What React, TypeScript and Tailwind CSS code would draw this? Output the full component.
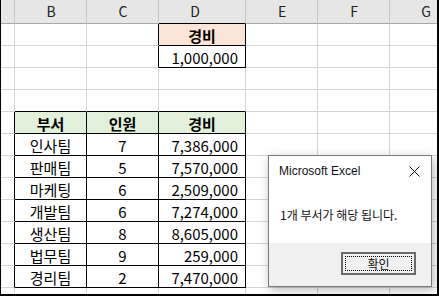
const COLS = [14, 72, 72, 87, 72, 72, 47];
const LETTERS = ["", "B", "C", "D", "E", "F", "G"];

type Cell = { text: string; align?: "c" | "r"; bold?: boolean; bg?: string };

const DATA: [string, string, string][] = [
  ["인사팀", "7", "7,386,000"],
  ["판매팀", "5", "7,570,000"],
  ["마케팅", "6", "2,509,000"],
  ["개발팀", "6", "7,274,000"],
  ["생산팀", "8", "8,605,000"],
  ["법무팀", "9", "259,000"],
  ["경리팀", "2", "7,470,000"],
];

function cellAt(r: number, c: number): Cell | null {
  if (r === 1 && c === 3) return { text: "경비", align: "c", bold: true, bg: "bg-[#fce4d6]" };
  if (r === 2 && c === 3) return { text: "1,000,000", align: "r" };
  if (r === 5 && c >= 1 && c <= 3)
    return { text: ["부서", "인원", "경비"][c - 1], align: "c", bold: true, bg: "bg-[#e2efda]" };
  if (r >= 6 && r <= 12 && c >= 1 && c <= 3) {
    const row = DATA[r - 6];
    return { text: row[c - 1], align: c === 3 ? "r" : "c" };
  }
  return null;
}

function bordered(r: number, c: number) {
  return (c === 3 && (r === 1 || r === 2)) || (c >= 1 && c <= 3 && r >= 5 && r <= 12);
}

// row heights include the 1px bottom line
const ROWS = [22, 22, 22, 22, 22, 22, 22, 22, 22, 22, 22, 22, 6];

function HeaderRow() {
  return (
    <div className="flex h-[24px] bg-[#e6e6e6]">
      {COLS.map((w, c) => (
        <div
          key={c}
          style={{ width: w }}
          className={`flex h-full shrink-0 items-center overflow-hidden border-b ${
            bordered(1, c) ? "border-b-black" : "border-b-[#a8a8a8]"
          } ${c < COLS.length - 1 ? "border-r border-r-[#c8c8c8]" : ""}`}
        >
          <span className="w-[72px] shrink-0 text-center text-[14px] text-[#222]">{LETTERS[c]}</span>
        </div>
      ))}
    </div>
  );
}

function Dialog() {
  return (
    <div className="absolute left-[267px] top-[155px] flex h-[132px] w-[164px] flex-col border border-[#7a7a7a] bg-white shadow-[2px_3px_10px_rgba(0,0,0,0.28)]">
      <div className="flex h-[30px] items-center justify-between pl-[10px] pr-[10px]">
        <span className="font-['Liberation_Sans',sans-serif] text-[12px] text-[#111]">Microsoft Excel</span>
        <svg width="11" height="11" viewBox="0 0 11 11" className="mr-[1px]">
          <path d="M0.5 0.5 L10.5 10.5 M10.5 0.5 L0.5 10.5" stroke="#111" strokeWidth="1" />
        </svg>
      </div>
      <div className="flex h-[57px] items-center pl-[11px] text-[12px] text-[#111]">1개 부서가 해당 됩니다.</div>
      <div className="flex flex-1 items-start justify-end bg-[#f0f0f0] pr-[15px] pt-[9px]">
        <div className="flex h-[23px] w-[75px] items-center justify-center border-2 border-[#6a6a6a] bg-[#f2f2f2] p-[2px]">
          <div className="flex h-full w-full items-center justify-center border border-dotted border-black text-[12px] text-[#111]">
            확인
          </div>
        </div>
      </div>
    </div>
  );
}

export default function App() {
  return (
    <div className="relative h-[296px] w-[439px] overflow-hidden border-b-2 border-l border-r-2 border-black bg-white font-['Noto_Sans_CJK_KR',sans-serif]">
      <HeaderRow />
      {ROWS.map((h, i) => {
        const r = i + 1;
        return (
          <div key={r} className="flex" style={{ height: h }}>
            {COLS.map((w, c) => {
              const cell = cellAt(r, c);
              const right = bordered(r, c) || bordered(r, c + 1);
              const bottom = bordered(r, c) || bordered(r + 1, c);
              return (
                <div
                  key={c}
                  style={{ width: w }}
                  className={`flex h-full shrink-0 items-center text-[15px] leading-none text-black ${
                    cell?.bg ?? ""
                  } ${c < COLS.length - 1 ? (right ? "border-r border-r-black" : "border-r border-r-[#d4d4d4]") : ""} ${
                    r < 13 ? (bottom ? "border-b border-b-black" : "border-b border-b-[#d4d4d4]") : ""
                  } ${cell?.align === "r" ? "justify-end pr-[7px]" : "justify-center"} ${cell?.bold ? "font-bold" : ""}`}
                >
                  {cell ? <span className="pt-[1px]">{cell.text}</span> : null}
                </div>
              );
            })}
          </div>
        );
      })}
      <Dialog />
    </div>
  );
}
